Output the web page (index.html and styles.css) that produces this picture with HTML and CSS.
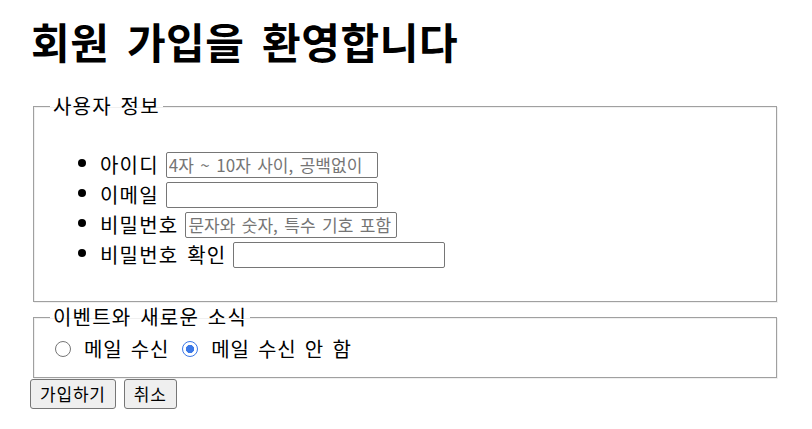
FILE: index.html
```html
<!DOCTYPE html>
<html lang="ko">
<head>
<meta charset="utf-8">
<title>회원 가입</title>
<link rel="stylesheet" href="styles.css">
</head>
<body>
<h1 class="title">회원 가입을 환영합니다</h1>
<form class="signup">
  <fieldset class="group group-user">
    <legend class="group-legend">사용자 정보</legend>
    <ul class="fields">
      <li class="field"><label class="field-label" for="uid">아이디</label><input class="text-input" id="uid" type="text" placeholder="4자 ~ 10자 사이, 공백없이"></li>
      <li class="field"><label class="field-label" for="mail">이메일</label><input class="text-input" id="mail" type="email"></li>
      <li class="field"><label class="field-label" for="pw">비밀번호</label><input class="text-input" id="pw" type="password" placeholder="문자와 숫자, 특수 기호 포함"></li>
      <li class="field"><label class="field-label" for="pw2">비밀번호 확인</label><input class="text-input" id="pw2" type="password"></li>
    </ul>
  </fieldset>
  <fieldset class="group group-news">
    <legend class="group-legend">이벤트와 새로운 소식</legend>
    <div class="radios">
      <input class="radio" type="radio" name="mail" id="yes"><label class="radio-label" for="yes">메일 수신</label>
      <input class="radio" type="radio" name="mail" id="no" checked><label class="radio-label" for="no">메일 수신 안 함</label>
    </div>
  </fieldset>
  <div class="actions">
    <button class="btn" type="submit">가입하기</button>
    <button class="btn" type="reset">취소</button>
  </div>
</form>
</body>
</html>
```
FILE: styles.css
```css
html, body {
  background: #fff;
}
body {
  margin: 0;
  padding: 0 32px 0 30px;
  font-family: "Noto Sans CJK KR", "Noto Sans", sans-serif;
  font-size: 20px;
  color: #000;
  letter-spacing: 1.2px;
  word-spacing: 0.1em;
}
.title {
  margin: 17px 0 28px 1px;
  font-size: 42px;
  line-height: 48px;
  font-weight: 700;
  letter-spacing: 0.6px;
  word-spacing: 0.12em;
}
.signup {
  margin: 0;
}
.group {
  margin: 0 3px;
  border: 1px solid #a0a0a0;
  box-shadow: inset 1px 1px 0 #f0f0f0, 1px 1px 0 #f0f0f0;
  padding: 0 15px;
  min-width: 0;
}
.group-legend {
  padding: 0 3px;
  margin-left: 1px;
  line-height: 26px;
  font-size: 20px;
}
.group-user {
  padding-bottom: 14px;
}
.fields {
  margin: 28px 0 20px;
  padding: 0 0 0 51px;
  list-style: disc;
}
.field {
  height: 30px;
  line-height: 30px;
}
.field-label {
  margin-right: 7px;
  vertical-align: middle;
}
.text-input {
  box-sizing: border-box;
  width: 212px;
  height: 26px;
  margin: 0;
  padding: 0 2px;
  border: 1px solid #767676;
  border-radius: 2px;
  font-family: "Noto Sans CJK KR", "Noto Sans", sans-serif;
  font-size: 17px;
  letter-spacing: 0;
  word-spacing: 0.1em;
  vertical-align: middle;
  background: #fff;
}
.text-input::placeholder {
  color: #757575;
}
.group-news {
  margin-top: 2px;
  padding: 6px 15px 15px;
}
.radios {
  height: 26px;
  line-height: 26px;
  display: flex;
  align-items: center;
}
.radio {
  appearance: none;
  -webkit-appearance: none;
  box-sizing: border-box;
  width: 16px;
  height: 16px;
  margin: 0 13px 0 6px;
  border: 1px solid #767676;
  border-radius: 50%;
  background: #fff;
}
.radio:checked {
  border: 1.5px solid #3b78e7;
  background: radial-gradient(circle, #3b78e7 0 3.8px, #fff 4.4px);
}
.radio-label {
  margin-right: 7px;
  letter-spacing: 0.8px;
}
.actions {
  display: flex;
  gap: 8px;
  margin-top: 1px;
}
.btn {
  box-sizing: border-box;
  height: 30px;
  padding: 0 9px;
  font-family: "Noto Sans CJK KR", "Noto Sans", sans-serif;
  font-size: 17px;
  letter-spacing: 0.8px;
  line-height: 26px;
  color: #000;
  background: #efefef;
  border: 1px solid #767676;
  border-radius: 3px;
}
```
